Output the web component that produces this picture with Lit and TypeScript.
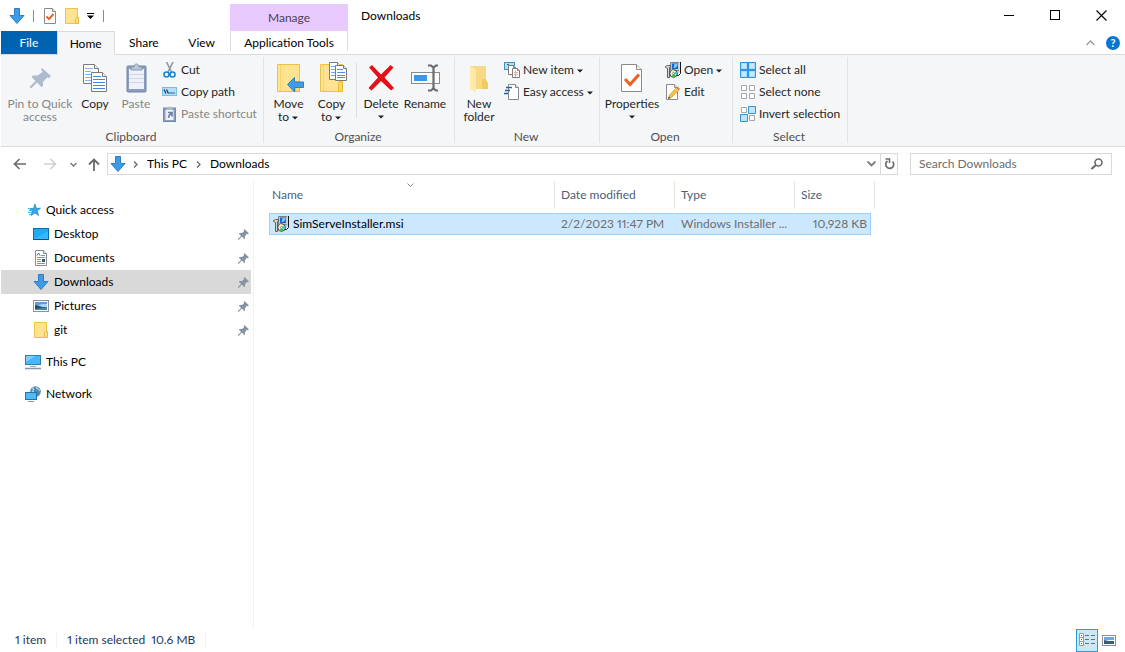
import { LitElement, html, css, svg, nothing, TemplateResult } from "lit";
import { customElement, property, state } from "lit/decorators.js";
import { classMap } from "lit/directives/class-map.js";

const icon = (w: number, h: number, body: unknown) =>
  html`<svg class="icon" width=${w} height=${h} viewBox="0 0 ${w} ${h}" aria-hidden="true">${body}</svg>`;

const caret = html`<svg class="caret" width="7" height="4" viewBox="0 0 7 4" aria-hidden="true"><path d="M0 0.5H6L3 3.5Z" fill="#1e1e1e"/></svg>`;

const page = (x: number, y: number, w: number, h: number, f: number, stroke = "#7b7b7b") => svg`
  <path d="M${x + 0.5} ${y + 0.5}H${x + w - f - 0.5}L${x + w - 0.5} ${y + f + 0.5}V${y + h - 0.5}H${x + 0.5}Z" fill="#fff" stroke=${stroke}/>
  <path d="M${x + w - f - 0.5} ${y + 0.5}V${y + f + 0.5}H${x + w - 0.5}" fill="#f0f0f0" stroke=${stroke}/>`;

const folder = svg`
  <path d="M0.500 0.500H22.500V27.500H0.500Z" fill="#ffe391" stroke="#edc345"/>
  <path d="M3.500 1V27" stroke="#f7d368"/>
  <path d="M18.500 27.500V19.500L19.500 17.500H22.500V27.500Z" fill="#ffd968" stroke="#e9bb37"/>`;

const msi = svg`
  <path d="M6 0H14.500V9.500L12 13H6Z" fill="#c3c6ca"/>
  <path d="M5.500 8V0.500H14" stroke="#7d8085" fill="none"/>
  <rect x="7" y="1.500" width="6" height="5.500" fill="#1767d2"/>
  <path d="M9.500 2H12.500V4L10 6H8.500Z" fill="#7cc6ff"/>
  <path d="M15.500 0V11.500L13.500 13.500H11" stroke="#151515" fill="none"/>
  <path d="M8 8.500H14" stroke="#8a8d91"/>
  <path d="M0.500 5.500V4.500L2.500 3.500H5.500V5.500H4.500V15.500H2.500V6.500Z" fill="#d6d6d6" stroke="#606060"/>
  <circle cx="8.500" cy="11.500" r="3.800" fill="#e9ebe6" stroke="#2a2a2a" stroke-width=".9"/>
  <path d="M8.500 11.500L5.600 9.500A3.500 3.500 0 0 1 8.500 8Z" fill="#f5f27a"/>
  <path d="M8.500 11.500L11.200 9.300A3.500 3.500 0 0 1 11.600 13.200Z" fill="#2bd0e0"/>
  <path d="M8.500 11.500L11 14A3.500 3.500 0 0 1 6.500 14.400Z" fill="#2fbf4e"/>
  <circle cx="8.500" cy="11.500" r="1" fill="#fff" stroke="#444" stroke-width=".5"/>`;

const downArrow = svg`<path d="M5.500 0.500H10.500V7.500H15L8 15.500L1 7.500H5.500Z" fill="#3a9be8" stroke="#2f7dc0"/>`;

const picture = svg`
  <rect x="0.500" y="0.500" width="15" height="11" fill="#fff" stroke="#8d9299"/>
  <rect x="2" y="2" width="12" height="8" fill="#a9d3f7"/>
  <path d="M2 2H14V4H9L6 5H2Z" fill="#5c9ce6"/>
  <path d="M2 5L5 5.500L9 7H14V10H2Z" fill="#1f5062"/>
  <path d="M2 9L14 7V10H2Z" fill="#4a86a8"/>`;

const smallPin = svg`<path d="M6.500 0L11 4.500L9.500 5.200L8.700 5L7 7.200L7 9.500L6.200 10L3.800 7.600L0.700 11L0 10.700L0 10L3 7L0.800 4.600L1.500 4L4 4L6 2.200L5.800 1Z" fill="#8793a0"/>`;

const ICONS: Record<string, TemplateResult> = {
  down: icon(16, 16, downArrow),
  check: icon(13, 16, svg`${page(0, 0, 12, 16, 3, "#8a8a8a")}<path d="M2.500 8.500L5 11L9.500 6" fill="none" stroke="#e8622a" stroke-width="2"/>`),
  folderSmall: icon(14, 16, svg`<path d="M0.500 0.500H12.500V15.500H0.500Z" fill="#ffe391" stroke="#edc345"/><path d="M10.500 15.500V11L11.500 9.500H13.500V15.500Z" fill="#ffe391" stroke="#e9bb37"/>`),
  customize: icon(8, 6, svg`<path d="M0 0.500H7" stroke="#000"/><path d="M0 2.500H7L3.500 6Z" fill="#000"/>`),
  minimize: icon(10, 11, svg`<path d="M0 5.500H10" stroke="#000"/>`),
  maximize: icon(11, 11, svg`<rect x="0.500" y="0.500" width="9" height="9" fill="none" stroke="#000"/>`),
  close: icon(11, 11, svg`<path d="M0.500 0.500L10.500 10.500M10.500 0.500L0.500 10.500" stroke="#000" stroke-width="1.100"/>`),
  collapse: icon(9, 6, svg`<path d="M0.500 5L4.500 1L8.500 5" fill="none" stroke="#9a9a9a" stroke-width="1.300"/>`),
  pinBig: icon(32, 32, svg`<path d="M18 6L27 14L25 16L23 15.500L19 20V24L17.500 25L13 20.500L7.500 26L6 26V24.500L11.500 19L7.500 15L9 13.500H13.500L18.500 10L17 7.500Z" fill="#acbbcf"/>`),
  copy: icon(32, 32, svg`${page(4, 2, 16, 20, 4)}
    <path d="M6 6.500H14M6 9.500H12M6 12.500H12M6 15.500H12M6 18.500H12" stroke="#7fb2f5"/>
    ${page(12, 10, 16, 20, 4)}
    <path d="M14 14.500H22M14 17.500H26M14 20.500H26M14 23.500H26M14 26.500H26" stroke="#3f86e8"/>`),
  paste: icon(32, 32, svg`
    <rect x="7" y="4" width="19" height="26" rx="1" fill="#8a9ebc" stroke="#7085a8"/>
    <rect x="9" y="7" width="15" height="20" fill="#eef2f8"/>
    <path d="M9 12.500H24M9 16.500H24M9 20.500H24" stroke="#cdd7e6"/>
    <path d="M11 8V5H14C14 1 19 1 19 5H22V8Z" fill="#bcc8d9" stroke="#8496b3"/>`),
  cut: icon(16, 16, svg`
    <path d="M4.500 0L9.500 10M11 0L6 10" stroke="#8b95a3" stroke-width="1.600"/>
    <circle cx="4.500" cy="12.500" r="2.500" fill="none" stroke="#1a86cf" stroke-width="1.600"/>
    <circle cx="10.500" cy="12.500" r="2.500" fill="none" stroke="#1a86cf" stroke-width="1.600"/>`),
  path: icon(16, 16, svg`
    <rect x="0.500" y="3.500" width="14" height="8" fill="#b4def8" stroke="#78bfe8"/>
    <path d="M2 5.500L4 9.500M4.500 5.500L6.500 9.500" stroke="#16395c" stroke-width="1.200"/>
    <path d="M7.500 9H8.500M9.500 9H10.500M11.500 9H12.500" stroke="#16395c" stroke-width="1.400"/>`),
  pasteLink: icon(16, 16, svg`
    <rect x="1.500" y="2" width="12" height="13.500" fill="#8ca0be" stroke="#7389ab"/>
    <rect x="3.500" y="4" width="8" height="10" fill="#edf2f8"/>
    <path d="M4.500 4V1.500H6.500C6.500 0 8.500 0 8.500 1.500H10.500V4Z" fill="#aab8cc"/>
    <path d="M6 6.500H10V10.500M9.500 7C7.500 8.500 6.500 9.500 6.500 12" fill="none" stroke="#6880a6" stroke-width="1.600"/>`),
  move: icon(32, 32, svg`<g transform="translate(4 2)">${folder}</g>
    <path d="M14.500 22.500L21.500 15.500V20H30.500V25.500H21.500V30Z" fill="#419de8" stroke="#2d7fc6"/>`),
  copyTo: icon(32, 32, svg`<g transform="translate(4 2)">${folder}</g>
    ${page(13, 0, 12, 18, 3)}<path d="M15 4.500H20M15 7.500H22M15 10.500H22M15 13.500H22" stroke="#6ba5ef"/>
    ${page(19, 3, 12, 16, 3)}<path d="M21 7.500H27M21 10.500H29M21 13.500H29M21 15.500H29" stroke="#4d92eb"/>`),
  remove: icon(32, 32, svg`<path d="M4 5.500L7 3L16 12.500L25.500 3L28.500 5.500L19.500 15.500L29 26L26 28.500L16 19L6.500 28.500L3.500 26L13 15.500Z" fill="#e50f17"/>`),
  rename: icon(32, 32, svg`
    <rect x="2.500" y="10.500" width="28" height="11" fill="#fff" stroke="#8b8b8b"/>
    <rect x="5" y="13" width="13" height="6" fill="#3998e8"/>
    <path d="M19 3.500H22L24.500 5.500L27 3.500H29M19 28.500H22L24.500 26.500L27 28.500H29M24.500 5V27" fill="none" stroke="#6b6b6b" stroke-width="2.200"/>`),
  newFolder: icon(32, 32, svg`
    <path d="M7 4H23V18L25 21V27H7Z" fill="#f2cb5f"/>
    <path d="M7 4H23V17H19V27H12Z" fill="#f8da86"/>
    <path d="M7 4L13 8V30.500L7 27Z" fill="#ffe9a9"/>`),
  newItem: icon(16, 16, svg`
    <rect x="0.500" y="0.500" width="10" height="7" fill="#b5dcf3" stroke="#3e90bd"/>
    <path d="M3 2.500H5M6 4.500H9" stroke="#2b6a93"/>
    ${page(4, 3, 8, 10, 2)}${page(8, 6, 8, 10, 2)}
    <path d="M10 10.500H14M10 12.500H14" stroke="#e8a8a0"/><path d="M11.500 8V15" stroke="#9cc4ec"/>`),
  easy: icon(16, 16, svg`${page(4, 0, 11, 16, 3, "#8a8a8a")}
    <path d="M2 3.500H8M1 6.500H6M0 9.500H4" stroke="#1c66a8" stroke-width="1.300"/>`),
  properties: icon(32, 32, svg`${page(5, 2, 21, 28, 5, "#8a8a8a")}
    <path d="M9 17L14 22.500L23 12.500" fill="none" stroke="#f0601e" stroke-width="3"/>`),
  msi: icon(16, 16, msi),
  edit: icon(16, 16, svg`${page(1, 0, 12, 16, 3, "#8a8a8a")}
    <path d="M3.500 14.500L4.500 11L11.500 3.500L14 6L7 13Z" fill="#f6c341" stroke="#c98e1c" stroke-width=".6"/>
    <path d="M11.500 3.500L12.500 2.500L15 5L14 6Z" fill="#dc6a72"/><path d="M3 15L3.800 12.500L5.500 14Z" fill="#444"/>`),
  selectAll: icon(16, 16, svg`
    <path d="M0.500 0.500H15.500V15.500H0.500Z" fill="#a9dcff" stroke="#2e93e0"/>
    <path d="M8 0V16M0 8H16" stroke="#2e93e0" stroke-width="2"/>
    <path d="M2 2H6V6H2ZM10 2H14V6H10ZM2 10H6V14H2ZM10 10H14V14H10Z" fill="#c5e8ff"/>`),
  selectNone: icon(16, 16, svg`<path d="M1.500 1.500H6.500V6.500H1.500ZM9.500 1.500H14.500V6.500H9.500ZM1.500 9.500H6.500V14.500H1.500ZM9.500 9.500H14.500V14.500H9.500Z" fill="#fff" stroke="#a5a5a5"/>`),
  invert: icon(16, 16, svg`
    <path d="M1.500 1.500H6.500V6.500H1.500ZM9.500 9.500H14.500V14.500H9.500Z" fill="#fff" stroke="#a5a5a5"/>
    <path d="M8.500 0.500H15.500V7.500H8.500ZM0.500 8.500H7.500V15.500H0.500Z" fill="#bfe4ff" stroke="#2e93e0"/>`),
  back: icon(14, 12, svg`<path d="M13 6H1.500M6.500 1L1.500 6L6.500 11" fill="none" stroke="#6a6a6a" stroke-width="1.600"/>`),
  forward: icon(14, 12, svg`<path d="M1 6H12.500M7.500 1L12.500 6L7.500 11" fill="none" stroke="#cfcfcf" stroke-width="1.600"/>`),
  recent: icon(7, 5, svg`<path d="M0.500 1L3.500 4L6.500 1" fill="none" stroke="#7a7a7a" stroke-width="1.500"/>`),
  up: icon(12, 13, svg`<path d="M6 13V1.500M1 6.500L6 1.500L11 6.500" fill="none" stroke="#6a6a6a" stroke-width="1.800"/>`),
  crumb: icon(5, 7, svg`<path d="M1 0.500L4 3.500L1 6.500" fill="none" stroke="#6a6a6a" stroke-width="1.300"/>`),
  chevron: icon(9, 6, svg`<path d="M0.500 0.500L4.500 4.500L8.500 0.500" fill="none" stroke="#7a7a7a" stroke-width="1.800"/>`),
  refresh: icon(11, 12, svg`<path d="M8.500 3.500A4 4 0 1 1 3.500 3" fill="none" stroke="#6a6a6a" stroke-width="1.700"/><path d="M1.500 1H5.500V5" fill="none" stroke="#6a6a6a" stroke-width="1.500"/>`),
  search: icon(12, 12, svg`<circle cx="7.500" cy="4.500" r="3.500" fill="none" stroke="#6a6a6a" stroke-width="1.600"/><path d="M5 7L0.500 11" stroke="#6a6a6a" stroke-width="2"/>`),
  sort: icon(7, 4, svg`<path d="M0.500 0.500L3.500 3.500L6.500 0.500" fill="none" stroke="#8a8a8a"/>`),
  star: icon(16, 16, svg`<path d="M10 2L11.300 6.300H15.500L12.300 9L13.500 13.500L10 11L6 13.500L7 9.500L4.500 6.500H8.500Z" fill="#3aa5e6" stroke="#2084c8" stroke-width=".7"/>
    <path d="M3 6.500H6M4 8.500H7M3 10.500H6M4 12.500H6.500" stroke="#4eaee8"/>`),
  desktop: icon(16, 16, svg`<rect x="0.500" y="2.500" width="15" height="11" fill="#1cabf5" stroke="#0f6aaf"/><path d="M1 13L15 5V13Z" fill="#35b9fb"/><path d="M1 13.500H15" stroke="#0c4f8a"/>`),
  documents: icon(16, 16, svg`${page(2, 0, 12, 16, 3, "#8a8a8a")}
    <path d="M4 5.500L5.500 3L7 5.500" fill="none" stroke="#1f7cc0"/><path d="M8 5.500H12M4 7.500H12M4 9.500H8M4 11.500H8M4 13.500H12" stroke="#5a9fd0"/><rect x="9" y="9" width="3" height="3" fill="#2b5d77"/>`),
  pictures: icon(16, 12, picture),
  thisPc: icon(16, 16, svg`<rect x="0.500" y="1.500" width="15" height="9" fill="#49b8fb" stroke="#2e7fae"/><path d="M1 2H10L1 8Z" fill="#7fd0ff"/><path d="M5 12.500H11" stroke="#9fb0c0"/><path d="M0 14.500H16" stroke="#8697ad" stroke-width="1.500"/>`),
  network: icon(16, 16, svg`<circle cx="10.500" cy="5.500" r="5.300" fill="#5288ac"/><path d="M7 2C9 2 9 5 7 6M11 1C12 3 14 3 15 5" fill="none" stroke="#a8d4ea" stroke-width="1.500"/>
    <rect x="0.500" y="6.500" width="11" height="7" fill="#4dbafa" stroke="#28729f"/><path d="M3 15.500H9" stroke="#8697ad"/>`),
  pin: icon(11, 11, smallPin),
  details: icon(16, 14, svg`<path d="M0.500 0.500H4.500V12.500H0.500ZM0.500 4.500H4.500M0.500 8.500H4.500" fill="#fff" stroke="#9a9a9a"/>
    <path d="M2 2.500H3M2 6.500H3M2 10.500H3" stroke="#5b5b5b"/><path d="M6 2.500H10M12 2.500H16M6 6.500H10M12 6.500H16M6 10.500H10M12 10.500H16" stroke="#6f6f6f"/>`),
  thumbs: icon(14, 11, svg`<rect x="0.500" y="0.500" width="13" height="10" fill="#fff" stroke="#8f8f8f"/><path d="M2 2H12V5H2Z" fill="#6ba8ea"/><path d="M2 5L7 6H12V9H2Z" fill="#34607e"/>`),
};

const shared = css`
  :host { display: block; }
  * { box-sizing: border-box; }
  svg { display: block; flex: none; }
  button {
    font: inherit; color: inherit; background: none; border: 0; padding: 0; margin: 0; cursor: default;
  }
  svg.caret { display: inline-block; vertical-align: middle; margin-left: 3px; }
`;

interface Cmd { id: string; icon: string; lines: string[]; drop?: boolean; off?: boolean; }
interface Group { label: string; big: (Cmd | null)[]; small: Cmd[]; }

const GROUPS: Group[] = [
  {
    label: "Clipboard",
    big: [
      { id: "pin", icon: "pinBig", lines: ["Pin to Quick", "access"], off: true },
      { id: "copy", icon: "copy", lines: ["Copy"] },
      { id: "paste", icon: "paste", lines: ["Paste"], off: true },
    ],
    small: [
      { id: "cut", icon: "cut", lines: ["Cut"] },
      { id: "path", icon: "path", lines: ["Copy path"] },
      { id: "pasteLink", icon: "pasteLink", lines: ["Paste shortcut"], off: true },
    ],
  },
  {
    label: "Organize",
    big: [
      { id: "move", icon: "move", lines: ["Move", "to"], drop: true },
      { id: "copy-to", icon: "copyTo", lines: ["Copy", "to"], drop: true },
      null,
      { id: "delete", icon: "remove", lines: ["Delete", ""], drop: true },
      { id: "rename", icon: "rename", lines: ["Rename"] },
    ],
    small: [],
  },
  {
    label: "New",
    big: [{ id: "new-folder", icon: "newFolder", lines: ["New", "folder"] }],
    small: [
      { id: "new-item", icon: "newItem", lines: ["New item"], drop: true },
      { id: "easy", icon: "easy", lines: ["Easy access"], drop: true },
    ],
  },
  {
    label: "Open",
    big: [{ id: "properties", icon: "properties", lines: ["Properties", ""], drop: true }],
    small: [
      { id: "open", icon: "msi", lines: ["Open"], drop: true },
      { id: "edit", icon: "edit", lines: ["Edit"] },
    ],
  },
  {
    label: "Select",
    big: [],
    small: [
      { id: "all", icon: "selectAll", lines: ["Select all"] },
      { id: "none", icon: "selectNone", lines: ["Select none"] },
      { id: "invert", icon: "invert", lines: ["Invert selection"] },
    ],
  },
];

@customElement("explorer-header")
class ExplorerHeader extends LitElement {
  static styles = [shared, css`
    .head { display: grid; grid-template-columns: 229px 118px 1fr; grid-template-rows: 31px 24px; }
    .quick { display: flex; align-items: center; gap: 8px; padding-left: 8px; }
    .bar { width: 1px; height: 12px; background: #8c8c8c; margin-right: 2px; }
    .manage { background: #e9caff; margin-top: 4px; display: flex; align-items: center; justify-content: center; color: #4b3d56; }
    .title { display: flex; align-items: center; padding-left: 13px; padding-right: 1px; }
    .title h1 { font-size: inherit; font-weight: 400; margin: 0; flex: 1; }
    .win { width: 46px; height: 30px; display: grid; place-items: center; }
    .tabs { display: flex; gap: 1px; border-bottom: 1px solid #dadbdc; }
    .tab { width: 57px; height: 23px; }
    .file { width: 56px; background: #0063b1; color: #fff; }
    .active { height: 24px; background: #f5f6f7; border: 1px solid #dadbdc; border-bottom: 0; margin-left: -1px; width: 58px; }
    .app { border-bottom: 1px solid #dadbdc; }
    .app button { width: 100%; height: 20px; padding-top: 4px; border-left: 1px solid #dcdcdc; border-right: 1px solid #dcdcdc; }
    .tools { display: flex; justify-content: flex-end; align-items: center; gap: 11px; padding-right: 5px; border-bottom: 1px solid #dadbdc; }
    .help { width: 14px; height: 14px; border-radius: 50%; background: #0a74d1; color: #fff; font-weight: 700; line-height: 14px; font-size: 11px; }
  `];

  render() {
    return html`<header class="head">
      <div class="quick">
        <button aria-label="Downloads">${ICONS.down}</button><span class="bar"></span>
        <button aria-label="Properties">${ICONS.check}</button>
        <button aria-label="New folder">${ICONS.folderSmall}</button>
        <button aria-label="Customize Quick Access Toolbar">${ICONS.customize}</button><span class="bar"></span>
      </div>
      <div class="manage">Manage</div>
      <div class="title">
        <h1>Downloads</h1>
        <button class="win" aria-label="Minimize">${ICONS.minimize}</button>
        <button class="win" aria-label="Maximize">${ICONS.maximize}</button>
        <button class="win" aria-label="Close">${ICONS.close}</button>
      </div>
      <nav class="tabs">
        <button class="tab file">File</button><button class="tab active">Home</button>
        <button class="tab">Share</button><button class="tab">View</button>
      </nav>
      <div class="app"><button>Application Tools</button></div>
      <div class="tools">
        <button aria-label="Minimize the Ribbon">${ICONS.collapse}</button>
        <button class="help" aria-label="Help">?</button>
      </div>
    </header>`;
  }
}

@customElement("explorer-ribbon")
class ExplorerRibbon extends LitElement {
  static styles = [shared, css`
    .ribbon {
      display: grid; grid-template-columns: 263px 191px 145px 133px 115px; padding: 2px 0 3px;
      background: #f5f6f7; border-bottom: 1px solid #dadbdc; color: #262626;
    }
    .group { border-right: 1px solid #e2e3e4; padding-left: 3px; display: grid; grid-template-rows: 72px 14px; }
    .cmds { display: flex; align-items: flex-start; padding-top: 2px; }
    .big { display: flex; flex-direction: column; align-items: center; padding-top: 3px; line-height: 13px; width: 43px; white-space: nowrap; }
    .big .lines { margin-top: 3px; }
    .lines span { display: block; min-height: 13px; }
    .lines span.solo .caret { margin-left: 0; vertical-align: top; margin-top: 5px; }
    .big.pin { width: 72px; }
    .big.copy { width: 38px; }
    .big.paste { width: 44px; }
    .big.delete { width: 40px; }
    .big.rename { width: 48px; }
    .big.new-folder { width: 42px; }
    .big.properties { width: 58px; }
    .rule { width: 1px; height: 55px; background: #dcdddf; margin: 4px 4px 0 3px; }
    .small { margin-left: 4px; display: flex; flex-direction: column; }
    .row { display: flex; align-items: center; gap: 3px; height: 22px; white-space: nowrap; }
    .off { color: #868686; }
    .label { text-align: center; line-height: 16px; color: #505050; padding-right: 5px; }
  `];

  private big(c: Cmd | null) {
    if (!c) return html`<span class="rule"></span>`;
    const last = c.lines.length - 1;
    return html`<button class="big ${c.id} ${c.off ? "off" : ""}" ?disabled=${c.off} aria-label=${c.lines.join(" ").trim()}>
      ${ICONS[c.icon]}
      <span class="lines">${c.lines.map((l, i) => html`<span class=${classMap({ solo: !l })}>${l}${c.drop && i === last ? caret : nothing}</span>`)}</span>
    </button>`;
  }

  render() {
    return html`<div class="ribbon">${GROUPS.map((g) => html`
      <section class="group" aria-label=${g.label}>
        <div class="cmds">
          ${g.big.map((c) => this.big(c))}
          ${g.small.length ? html`<div class="small">${g.small.map((c) => html`
            <button class="row ${c.off ? "off" : ""}" ?disabled=${c.off}>${ICONS[c.icon]}<span>${c.lines[0]}${c.drop ? caret : nothing}</span></button>`)}</div>` : nothing}
        </div>
        <div class="label">${g.label}</div>
      </section>`)}</div>`;
  }
}

@customElement("explorer-address")
class ExplorerAddress extends LitElement {
  static styles = [shared, css`
    .bar { display: flex; align-items: center; padding: 6px 13px 6px 12px; }
    .back { margin-right: 16px; }
    .forward { margin-right: 13px; }
    .recent { margin-right: 11px; }
    .up { margin-right: 7px; }
    .path { flex: 1; display: flex; align-items: center; height: 22px; border: 1px solid #d9d9d9; padding-left: 2px; }
    .path a { color: #000; text-decoration: none; }
    .path .place { margin-right: 7px; }
    .path a { margin: 0 9px; }
    .open { margin-left: auto; width: 17px; height: 20px; display: grid; place-items: center; }
    .again { width: 17px; height: 20px; border-left: 1px solid #d9d9d9; display: grid; place-items: center; }
    .find { width: 202px; height: 22px; margin-left: 12px; border: 1px solid #d9d9d9; display: flex; align-items: center; padding: 0 8px; }
    input { flex: 1; min-width: 0; border: 0; outline: 0; padding: 0; background: none; font: inherit; }
    input::placeholder { color: #6d6d6d; opacity: 1; }
  `];

  render() {
    return html`<div class="bar">
      <button class="back" aria-label="Back">${ICONS.back}</button>
      <button class="forward" aria-label="Forward" disabled>${ICONS.forward}</button>
      <button class="recent" aria-label="Recent locations">${ICONS.recent}</button>
      <button class="up" aria-label="Up">${ICONS.up}</button>
      <nav class="path" aria-label="Address">
        <span class="place">${ICONS.down}</span>${ICONS.crumb}<a href="#pc">This PC</a>${ICONS.crumb}<a href="#downloads">Downloads</a>
        <button class="open" aria-label="Previous locations">${ICONS.chevron}</button>
        <button class="again" aria-label="Refresh">${ICONS.refresh}</button>
      </nav>
      <label class="find"><input type="text" aria-label="Search Downloads" placeholder="Search Downloads">${ICONS.search}</label>
    </div>`;
  }
}

const PLACES = [
  { name: "Quick access", icon: "star", top: true },
  { name: "Desktop", icon: "desktop", pinned: true },
  { name: "Documents", icon: "documents", pinned: true },
  { name: "Downloads", icon: "down", pinned: true },
  { name: "Pictures", icon: "pictures", pinned: true },
  { name: "git", icon: "folderSmall", pinned: true },
  { name: "This PC", icon: "thisPc", top: true, gap: true },
  { name: "Network", icon: "network", top: true, gap: true },
];

@customElement("explorer-sidebar")
class ExplorerSidebar extends LitElement {
  @property() current = "Downloads";

  static styles = [shared, css`
    :host { border-right: 1px solid #f2f2f2; }
    .places { padding: 17px 2px 0 0; }
    .place { display: flex; align-items: center; height: 24px; padding: 0 2px 0 32px; color: #000; text-decoration: none; }
    .top { padding-left: 24px; }
    .gap { margin-top: 8px; }
    .current { background: #d9d9d9; }
    .glyph { width: 16px; display: grid; place-items: center; margin-right: 5px; }
    .name { flex: 1; }
  `];

  render() {
    return html`<nav class="places" aria-label="Places">${PLACES.map((p) => html`
      <a href="#${p.name}" class=${classMap({ place: true, top: !!p.top, gap: !!p.gap, current: p.name === this.current })}>
        <span class="glyph">${ICONS[p.icon]}</span><span class="name">${p.name}</span>${p.pinned ? ICONS.pin : nothing}
      </a>`)}</nav>`;
  }
}

@customElement("explorer-files")
class ExplorerFiles extends LitElement {
  @state() private files = [
    { name: "SimServeInstaller.msi", date: "2/2/2023 11:47 PM", type: "Windows Installer ...", size: "10,928 KB" },
  ];

  static styles = [shared, css`
    table { display: block; margin-left: 15px; width: 606px; }
    thead, tbody { display: block; }
    tr { display: grid; grid-template-columns: 286px 120px 120px 1fr; align-items: center; }
    th { font-weight: 400; text-align: left; color: #4c607a; height: 28px; line-height: 28px; border-right: 1px solid #e5e5e5; padding: 0 0 0 6px; position: relative; }
    th:first-child, td:first-child { padding-left: 3px; }
    .sort { position: absolute; top: 2px; left: 50%; margin-left: -5px; }
    tbody { padding: 4px 4px 0 0; }
    .selected { background: #cce8ff; border: 1px solid #99d1ff; height: 22px; grid-template-columns: 285px 120px 120px 1fr; }
    td { padding: 0 0 0 6px; color: #6d6d6d; white-space: nowrap; }
    td.name { display: flex; align-items: center; gap: 4px; color: #000; }
    td.size { text-align: right; padding-right: 3px; }
  `];

  render() {
    return html`<table>
      <thead><tr>
        <th scope="col">Name<span class="sort">${ICONS.sort}</span></th>
        <th scope="col">Date modified</th><th scope="col">Type</th><th scope="col">Size</th>
      </tr></thead>
      <tbody>${this.files.map((f) => html`<tr class="selected">
        <td class="name">${ICONS.msi}<span>${f.name}</span></td>
        <td>${f.date}</td><td>${f.type}</td><td class="size">${f.size}</td>
      </tr>`)}</tbody>
    </table>`;
  }
}

@customElement("explorer-status")
class ExplorerStatus extends LitElement {
  static styles = [shared, css`
    .status { display: flex; align-items: center; height: 24px; padding: 0 5px 0 14px; color: #1e395b; }
    .bar { width: 1px; height: 16px; background: #f3f3f3; margin: 0 10px; }
    .size { margin-left: 6px; }
    .views { margin-left: auto; display: flex; }
    .views button { width: 22px; height: 23px; display: grid; place-items: center; }
    .views .on { background: #cbe8f6; border: 1px solid #26a0da; }
  `];

  render() {
    return html`<footer class="status">
      <span>1 item</span><span class="bar"></span><span>1 item selected</span><span class="size">10.6 MB</span><span class="bar"></span>
      <div class="views">
        <button class="on" aria-label="Details view">${ICONS.details}</button>
        <button aria-label="Large thumbnails">${ICONS.thumbs}</button>
      </div>
    </footer>`;
  }
}

@customElement("app-root")
class AppRoot extends LitElement {
  static styles = [shared, css`
    :host {
      display: flex; flex-direction: column; min-height: 100vh; padding-left: 1px; background: #fff; color: #000;
      font: 12px/16px Lato, "Segoe UI", "Open Sans", sans-serif;
      font-variant-numeric: proportional-nums;
    }
    .body { flex: 1; display: grid; grid-template-columns: 253px 1fr; }
  `];

  render() {
    return html`
      <explorer-header></explorer-header>
      <explorer-ribbon></explorer-ribbon>
      <explorer-address></explorer-address>
      <main class="body"><explorer-sidebar></explorer-sidebar><explorer-files></explorer-files></main>
      <explorer-status></explorer-status>`;
  }
}
